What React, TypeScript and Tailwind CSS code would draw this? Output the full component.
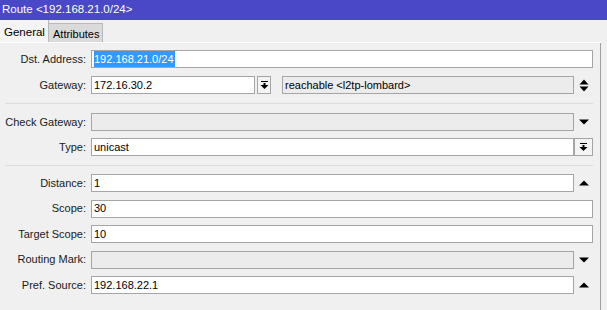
import React from 'react';

const DownBar = () => (
    <svg width="9" height="10" viewBox="0 0 9 10">
        <rect x="1" y="1" width="7" height="1" fill="#000" />
        <rect x="3.5" y="3" width="2" height="2" fill="#000" />
        <polygon points="0.5,5 8.5,5 4.5,9" fill="#000" />
    </svg>
);

const UpDown = () => (
    <svg width="10" height="13" viewBox="0 0 10 13">
        <polygon points="5,0.5 9.5,5.5 0.5,5.5" fill="#000" />
        <polygon points="0.5,7.5 9.5,7.5 5,12.5" fill="#000" />
    </svg>
);

const Down = () => (
    <svg width="10" height="6" viewBox="0 0 10 6">
        <polygon points="0,0.5 10,0.5 5,5.5" fill="#000" />
    </svg>
);

const Up = () => (
    <svg width="10" height="6" viewBox="0 0 10 6">
        <polygon points="5,0.5 10,5.5 0,5.5" fill="#000" />
    </svg>
);

function Row({ label, children }: { label: string; children: React.ReactNode }) {
    return (
        <div className="flex items-center h-[18px] w-[593px]">
            <div className="w-[87px] pr-[1px] text-right text-[#1a1a1a] whitespace-nowrap">{label}</div>
            <div className="flex flex-1 items-center h-full ml-[4px]">{children}</div>
        </div>
    );
}

function Field({ value, gray, className = '' }: { value?: React.ReactNode; gray?: boolean; className?: string }) {
    return (
        <div
            className={`h-[18px] border border-[#a5a5a5] flex items-center pl-[2px] text-black whitespace-nowrap overflow-hidden ${gray ? 'bg-[#ececec]' : 'bg-white'} ${className}`}
        >
            {value}
        </div>
    );
}

function IconSlot({ children }: { children: React.ReactNode }) {
    return <div className="w-[19px] h-[18px] flex items-center justify-center">{children}</div>;
}

function Separator() {
    return <div className="w-[588px] ml-[5px] h-[1px] bg-[#dcdcdc]" />;
}

export default function App() {
    return (
        <div
            className="w-[607px] h-[310px] bg-[#f0f0f0] text-[11px] overflow-hidden"
            style={{ fontFamily: '"Liberation Sans", Arial, sans-serif' }}
        >
            <div className="h-[20px] bg-[#4a48c6] text-white pl-[2px] leading-[19px] text-[11.5px]">
                Route &lt;192.168.21.0/24&gt;
            </div>

            <div className="flex items-end h-[23px] w-[601px] border-b border-white">
                <div className="w-[49px] h-[22px] border-r border-[#b8b8b8] bg-[#f4f4f4] pl-[4px] pt-[4px] text-[11.5px] text-black whitespace-nowrap">
                    General
                </div>
                <div className="w-[54px] h-[19px] border-t border-r border-[#b8b8b8] bg-[#dadada] pl-[4px] pt-[2px] text-black whitespace-nowrap">
                    Attributes
                </div>
            </div>

            <div className="w-[601px] h-[267px] border-r border-[#a0a0a0] pt-[7px] flex flex-col">
                <div className="flex flex-col gap-[8px]">
                    <Row label="Dst. Address:">
                        <Field
                            className="w-[502px]"
                            value={<span className="bg-[#3399ff] text-white pr-[1px]">192.168.21.0/24</span>}
                        />
                    </Row>
                    <Row label="Gateway:">
                        <Field className="w-[164px]" value="172.16.30.2" />
                        <div className="ml-[2px] w-[14px] h-[18px] border border-[#a5a5a5] bg-[#f4f4f4] flex items-center justify-center">
                            <DownBar />
                        </div>
                        <Field className="ml-[11px] w-[292px]" gray value="reachable <l2tp-lombard>" />
                        <IconSlot>
                            <UpDown />
                        </IconSlot>
                    </Row>
                </div>

                <div className="mt-[9px] mb-[9px]">
                    <Separator />
                </div>

                <div className="flex flex-col gap-[7px]">
                    <Row label="Check Gateway:">
                        <Field className="w-[483px]" gray />
                        <IconSlot>
                            <Down />
                        </IconSlot>
                    </Row>
                    <Row label="Type:">
                        <Field className="w-[483px]" value="unicast" />
                        <div className="w-[19px] h-[18px] border border-[#a5a5a5] bg-[#f4f4f4] flex items-center justify-center">
                            <DownBar />
                        </div>
                    </Row>
                </div>

                <div className="mt-[9px] mb-[8px]">
                    <Separator />
                </div>

                <div className="flex flex-col gap-[7.5px]">
                    <Row label="Distance:">
                        <Field className="w-[483px]" value="1" />
                        <IconSlot>
                            <Up />
                        </IconSlot>
                    </Row>
                    <Row label="Scope:">
                        <Field className="w-[502px]" value="30" />
                    </Row>
                    <Row label="Target Scope:">
                        <Field className="w-[502px]" value="10" />
                    </Row>
                    <Row label="Routing Mark:">
                        <Field className="w-[483px]" gray />
                        <IconSlot>
                            <Down />
                        </IconSlot>
                    </Row>
                    <Row label="Pref. Source:">
                        <Field className="w-[483px]" value="192.168.22.1" />
                        <IconSlot>
                            <Up />
                        </IconSlot>
                    </Row>
                </div>
            </div>
        </div>
    );
}
